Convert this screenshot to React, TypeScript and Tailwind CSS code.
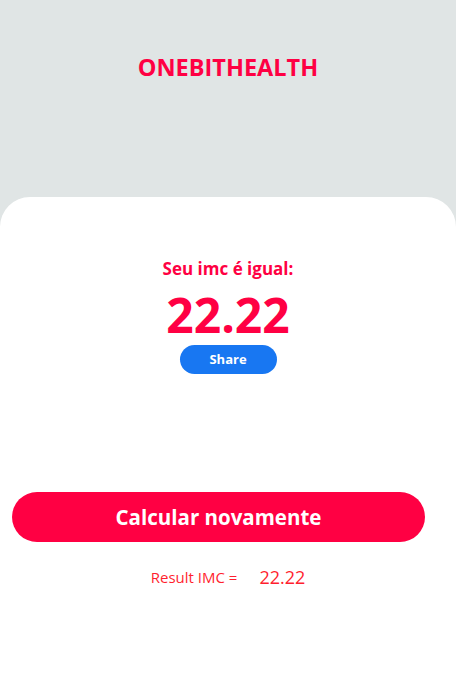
import React from "react";

export default function App() {
  return (
    <div className="min-h-[686px] w-full bg-[#e0e5e5] flex flex-col font-['Open_Sans',sans-serif]">
      <div className="h-[197px] pt-[50px] flex justify-center">
        <h1 className="text-[23.5px] leading-[34px] font-bold text-[#ff0043]">ONEBITHEALTH</h1>
      </div>
      <div className="flex-1 bg-white rounded-t-[30px] flex flex-col items-center pt-[60px]">
        <p className="text-[17px] leading-[24px] font-bold text-[#ff0043]">Seu imc é igual:</p>
        <p className="mt-[6px] text-[48px] leading-[56px] font-bold text-[#ff0043]">22.22</p>
        <button className="mt-[2px] w-[97px] h-[29px] rounded-full bg-[#1877f2] text-white text-[13px] font-bold">
          Share
        </button>
        <button className="self-start ml-[12px] mt-[118px] w-[413px] h-[50px] rounded-full bg-[#ff0043] text-white text-[20.5px] font-bold">
          Calcular novamente
        </button>
        <div className="mt-[22px] flex items-center gap-[22px] text-[#ff1f2f]">
          <span className="text-[15px]">Result IMC =</span>
          <span className="text-[18px]">22.22</span>
        </div>
      </div>
    </div>
  );
}
